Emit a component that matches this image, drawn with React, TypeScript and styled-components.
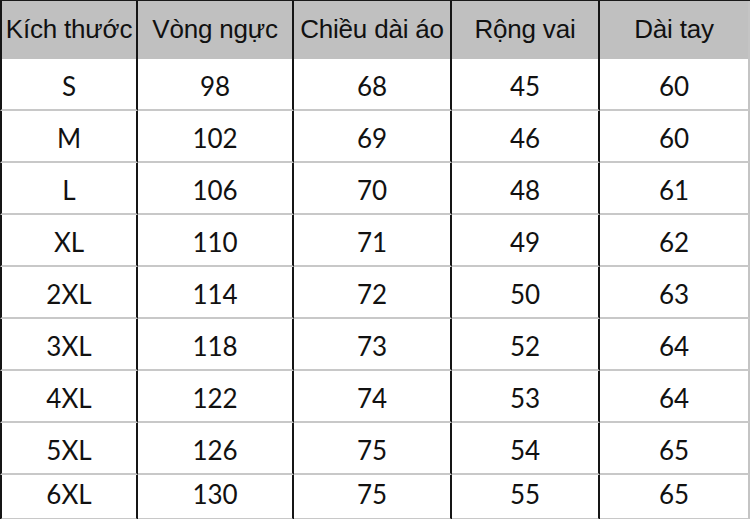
import styled, { createGlobalStyle } from "styled-components";

const GlobalStyle = createGlobalStyle`
  html, body {
    margin: 0;
    padding: 0;
    background: #fff;
  }
`;

const columns = ["Kích thước", "Vòng ngực", "Chiều dài áo", "Rộng vai", "Dài tay"];

const rows = [
  ["S", "98", "68", "45", "60"],
  ["M", "102", "69", "46", "60"],
  ["L", "106", "70", "48", "61"],
  ["XL", "110", "71", "49", "62"],
  ["2XL", "114", "72", "50", "63"],
  ["3XL", "118", "73", "52", "64"],
  ["4XL", "122", "74", "53", "64"],
  ["5XL", "126", "75", "54", "65"],
  ["6XL", "130", "75", "55", "65"],
];

const Table = styled.div`
  display: grid;
  grid-template-columns: 138px 156px 158px 148px 150px;
  grid-template-rows: 58px repeat(8, 52px) 45px;
  width: 750px;
  height: 519px;
  box-sizing: border-box;
  border-top: 1px solid #1a1a1a;
  overflow: hidden;
`;

const Cell = styled.div<{ $first?: boolean; $last?: boolean }>`
  display: flex;
  align-items: center;
  justify-content: center;
  box-sizing: border-box;
  border-left: ${(p) => (p.$first ? "2px solid #151515" : "none")};
  border-right: 2px solid ${(p) => (p.$last ? "#c4c4c4" : "#151515")};
  color: #111;
  white-space: nowrap;
`;

const HeadCell = styled(Cell)`
  background: #c0c0c0;
  font-family: "Liberation Sans", Arial, sans-serif;
  font-size: 26px;
  letter-spacing: -0.2px;
  padding-bottom: 2px;
`;

const BodyCell = styled(Cell)<{ $lastRow?: boolean }>`
  border-bottom: 2px solid #c8c8c8;
  font-family: Lato, "Open Sans", sans-serif;
  font-size: 26px;
  padding-top: ${(p) => (p.$lastRow ? "0" : "3px")};
  padding-bottom: ${(p) => (p.$lastRow ? "5px" : "0")};
`;

const App = () => {
  return (
    <>
      <GlobalStyle />
      <Table>
        {columns.map((c, i) => (
          <HeadCell key={c} $first={i === 0} $last={i === columns.length - 1}>
            {c}
          </HeadCell>
        ))}
        {rows.map((r, ri) =>
          r.map((v, i) => (
            <BodyCell
              key={r[0] + i}
              $first={i === 0}
              $last={i === r.length - 1}
              $lastRow={ri === rows.length - 1}
            >
              {v}
            </BodyCell>
          ))
        )}
      </Table>
    </>
  );
};

export default App;
